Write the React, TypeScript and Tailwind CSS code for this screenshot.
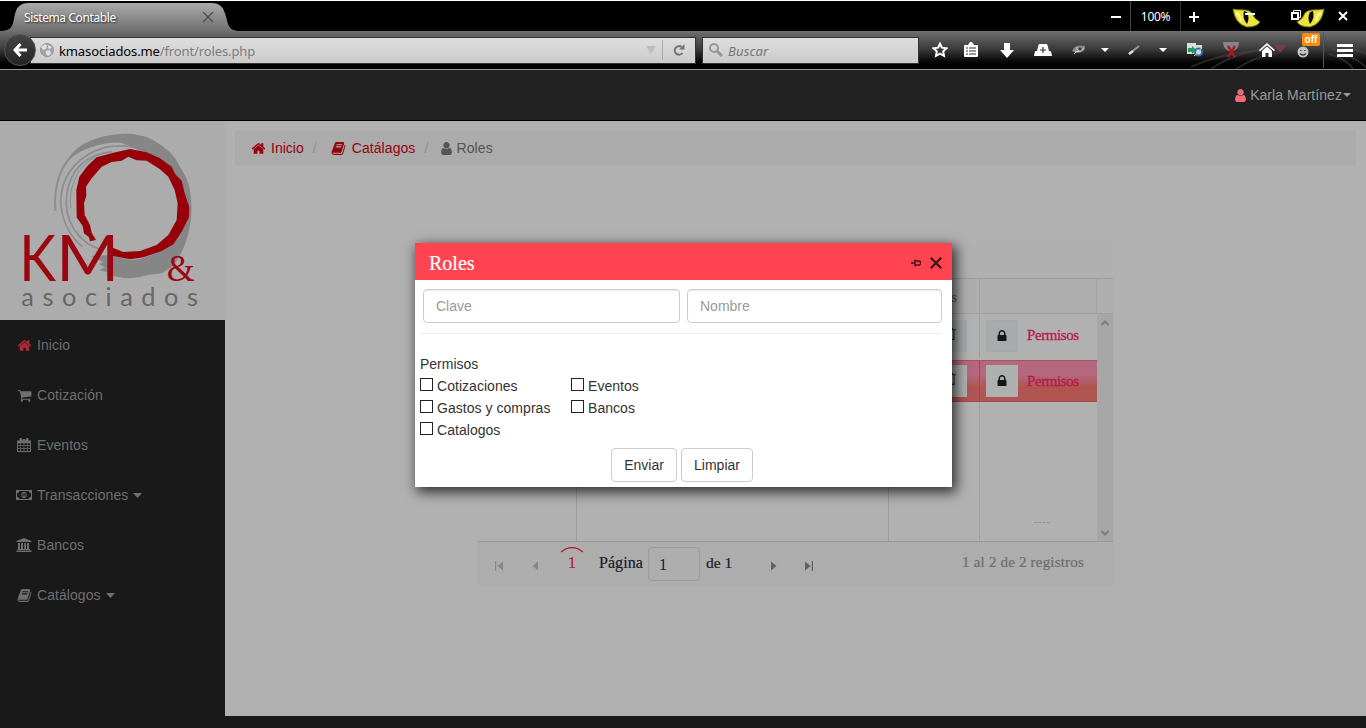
import React from "react";

const PATHS = {
  home: "M1472 992v480q0 26-19 45t-45 19h-384v-384h-256v384h-384q-26 0-45-19t-19-45v-480q0-1 .5-3t.5-3l575-474 575 474q1 2 1 6zm223-69l-62 74q-8 9-21 11h-3q-13 0-21-7l-692-577-692 577q-12 8-24 7-13-2-21-11l-62-74q-8-10-7-23.5t11-21.5l719-599q32-26 76-26t76 26l244 204v-195q0-14 9-23t23-9h192q14 0 23 9t9 23v408l219 182q10 8 11 21.5t-7 23.5z",
  user: "M1536 1399q0 109-62.5 187t-150.5 78h-854q-88 0-150.5-78t-62.5-187q0-85 8.5-160.5t31.5-152 58.5-131 94-89 134.5-34.5q131 128 313 128t313-128q76 0 134.5 34.5t94 89 58.5 131 31.5 152 8.5 160.5zm-256-887q0 159-112.5 271.5t-271.5 112.5-271.5-112.5-112.5-271.5 112.5-271.5 271.5-112.5 271.5 112.5 112.5 271.5z",
  cart: "M704 1536q0 52-38 90t-90 38-90-38-38-90 38-90 90-38 90 38 38 90zm896 0q0 52-38 90t-90 38-90-38-38-90 38-90 90-38 90 38 38 90zm128-1088v512q0 24-16.5 42.5t-40.5 21.5l-1044 122q13 60 13 70 0 16-24 64h920q26 0 45 19t19 45-19 45-45 19h-1024q-26 0-45-19t-19-45q0-11 8-31.5t16-36 21.5-40 15.5-29.5l-177-823h-204q-26 0-45-19t-19-45 19-45 45-19h256q16 0 28.5 6.5t19.5 15.5 13 24.5 8 26 5.5 29.5 4.5 26h1201q26 0 45 19t19 45z",
  lock: "M640 768h512v-192q0-106-75-181t-181-75-181 75-75 181v192zm832 96v576q0 40-28 68t-68 28h-960q-40 0-68-28t-28-68v-576q0-40 28-68t68-28h32v-192q0-184 132-316t316-132 316 132 132 316v192h32q40 0 68 28t28 68z",
  book: "M1703 478q40 57 18 129l-275 906q-19 64-76.5 107.5t-122.5 43.5h-923q-77 0-148.5-53.5t-99.5-131.5q-24-67-2-127 0-4 3-27t4-37q1-8-3-21.5t-3-19.5q2-11 8-21t16.5-23.5 16.5-23.5q23-38 45-91.5t30-91.5q3-10 .5-30t-.5-28q3-11 17-28t17-23q21-36 42-92t25-90q1-9-2.5-32t.5-28q4-13 22-30.5t22-22.5q19-26 42.5-84.5t27.5-96.5q1-8-3-25.5t-2-26.5q2-8 9-18t18-23 17-21q8-12 16.5-30.5t15-35 16-36 19.5-32 26.5-23.5 36-11.5 47.5 5.5l-1 3q38-9 51-9h761q74 0 114 56t18 130l-274 906q-36 119-71.5 153.5t-128.5 34.5h-869q-27 0-38 15-11 16-1 43 24 70 144 70h923q29 0 56-15.5t35-41.5l300-987q7-22 5-57 38 15 59 43zm-1064 2q-4 13 2 22.5t20 9.5h608q13 0 25.5-9.5t16.5-22.5l21-64q4-13-2-22.5t-20-9.5h-608q-13 0-25.5 9.5t-16.5 22.5zm-83 256q-4 13 2 22.5t20 9.5h608q13 0 25.5-9.5t16.5-22.5l21-64q4-13-2-22.5t-20-9.5h-608q-13 0-25.5 9.5t-16.5 22.5z",
};

function Icon({ name, className = "size-[14px]" }: { name: keyof typeof PATHS; className?: string }) {
  return (
    <svg viewBox="0 0 1792 1792" className={`shrink-0 ${className}`} fill="currentColor">
      <path d={PATHS[name]} />
    </svg>
  );
}

function Caret({ className = "h-1 w-2" }: { className?: string }) {
  return (
    <svg viewBox="0 0 8 4" preserveAspectRatio="none" className={`shrink-0 ${className}`} fill="currentColor">
      <path d="M0 0h8L4 4z" />
    </svg>
  );
}

function CalendarIcon() {
  return (
    <svg viewBox="0 0 14 14" className="size-[14px]" fill="currentColor">
      <path fillRule="evenodd" d="M0 2.500h14V14H0zM1 5.200v2h2.300v-2zM4 5.200v2h2.600v-2zM7.400 5.200v2H10v-2zM10.700 5.200v2H13v-2zM1 8v2h2.300V8zM4 8v2h2.600V8zM7.400 8v2H10V8zM10.700 8v2H13V8zM1 10.800V13h2.300v-2.200zM4 10.800V13h2.600v-2.200zM7.400 10.800V13H10v-2.200zM10.700 10.800V13H13v-2.200z" />
      <rect x="2.5" y="0" width="2.500" height="3.500" rx="1" />
      <rect x="9" y="0" width="2.500" height="3.500" rx="1" />
      <rect x="5.500" y="1" width="3" height="2" rx="1" />
    </svg>
  );
}

function MoneyIcon() {
  return (
    <svg viewBox="0 0 16 10" className="h-[10px] w-4" fill="none" stroke="currentColor">
      <rect x="0.5" y="0.5" width="15" height="9" strokeWidth="1.200" />
      <path d="M1 3.200C2.500 3.200 3 2.500 3 1H1zM15 3.200C13.500 3.200 13 2.500 13 1h2zM1 6.800C2.500 6.800 3 7.500 3 9H1zM15 6.800C13.500 6.800 13 7.500 13 9h2z" fill="currentColor" stroke="none" />
      <ellipse cx="8" cy="5" rx="2.200" ry="2.700" />
      <path d="M7.200 4l.8-.7V7M7 6.700h2" strokeWidth="0.800" />
    </svg>
  );
}

function BankIcon() {
  return (
    <svg viewBox="0 0 16 14" className="h-[14px] w-4" fill="currentColor">
      <path d="M8 0l7.500 3v1H.5V3zM2 5h2v6h1V5h2v6h1.200V5H10v6h1V5h2v6h1v1H1.500v-1H2zM.5 12.500h15V14H.5z" />
    </svg>
  );
}

function Logo() {
  return (
    <svg viewBox="0 3 675 597" className="h-[199px] w-[225px] shrink-0 bg-[#acacac]">
      <g fill="none" stroke="#8d8d8d">
        <path d="M166 272C160 190 185 125 235 92Q270 70 306 65" strokeWidth="6" />
        <path d="M246 380C150 295 155 130 315 82Q380 70 440 92" strokeWidth="5" />
        <path d="M298 387C235 368 190 300 200 225C210 155 250 105 335 95" strokeWidth="5" />
        <path d="M212 265C205 195 235 135 290 110" strokeWidth="3" />
      </g>
      <path
        fill="#868686"
        d="M205 120C230 65 315 38 402 42L410 45C450 48 495 78 525 114L555 166C577 210 577 275 571 310C565 355 550 395 520 437L486 460L440 466Q400 480 355 471L318 465L326 458L297 450L315 442L298 433L310 425L296 420L272 408L330 405L390 420C490 415 570 335 530 210C505 135 440 95 361 68C310 66 245 85 205 120Z"
      />
      <path
        fill="#960008"
        d="M288 360L270 364L267 352L252 340L248 318L230 292L229 210L238 170L262 138L290 112L340 98L390 87L440 97L480 115L515 140L525 162L545 182L554 220L568 262L567 292L545 335L520 373L485 393L430 412L390 418L340 408L324 394L330 380L370 396L420 393L470 375L505 345L530 300L533 250L524 210L505 170L480 148L440 122L410 121L385 110L365 122L335 126L305 140L275 175L258 200L259 228L252 250L254 285L270 315L275 338Z"
      />
      <g fill="#9b0711">
        <text x="58" y="482" fontFamily="Lato" fontSize="192" textLength="110" lengthAdjust="spacingAndGlyphs">K</text>
        <text x="168" y="482" fontFamily="Lato" fontSize="192" textLength="190" lengthAdjust="spacingAndGlyphs">M</text>
        <text x="500" y="482" fontFamily="Liberation Serif" fontSize="112" textLength="84" lengthAdjust="spacingAndGlyphs">&amp;</text>
      </g>
      <text x="64" y="557" fontFamily="Lato" fontSize="76" textLength="530" fill="#666">asociados</text>
    </svg>
  );
}

function Eye({ flip = false }: { flip?: boolean }) {
  return (
    <svg viewBox="0 0 30 20" className={`h-5 w-[30px] ${flip ? "-scale-x-100" : ""}`}>
      <path d="M1 1C8 3 15 0 20 5Q22 11 28 14Q25 19 15 19Q3 16 1 1Z" fill="#ece43c" stroke="#77721a" />
      <path d="M12 3Q10 10 15 16Q18 10 15 4Z" fill="#0a0900" />
      <path d="M4 5q4 1 5 8" stroke="#ffffa0" strokeWidth="2" fill="none" />
    </svg>
  );
}

function TabStrip() {
  return (
    <div className="flex h-[31px] border-t border-white bg-black">
      <div className="relative h-[30px] w-[240px]">
        <svg viewBox="0 0 240 30" className="absolute inset-0 h-[30px] w-[240px]">
          <defs>
            <linearGradient id="tab" x1="0" y1="0" x2="0" y2="1">
              <stop offset="0" stopColor="#aaa" />
              <stop offset="1" stopColor="#707070" />
            </linearGradient>
          </defs>
          <path d="M0 30C16 30 12 20 16 10Q19 2 28 2H212Q221 2 224 10C229 21 226 30 240 30Z" fill="url(#tab)" />
        </svg>
        <div className="relative flex h-[30px] items-center justify-between pr-[26px] pl-6">
          <span className="pt-[3px] text-[12px] tracking-[-0.4px] text-white [text-shadow:1px_1px_2px_#222]">Sistema Contable</span>
          <svg viewBox="0 0 12 12" className="mt-0.5 size-3" stroke="#4b4b4b" strokeWidth="1.200">
            <path d="M1 1l10 10M11 1L1 11" />
          </svg>
        </div>
      </div>
      <div className="ml-auto flex h-[30px] items-center text-white">
        <div className="flex h-full w-[31px] items-center justify-center border-r border-[#444] pl-[2px]">
          <div className="mt-0.5 h-0.5 w-[10px] bg-white" />
        </div>
        <div className="flex h-full w-[50px] items-center justify-center border-r border-[#333] pt-0.5 text-[12px] tracking-[-0.3px]">100%</div>
        <div className="flex w-[28px] justify-center pt-0.5 pr-[2px]">
          <svg viewBox="0 0 10 10" className="size-[10px]" stroke="white" strokeWidth="2"><path d="M5 0v10M0 5h10" /></svg>
        </div>
        <div className="relative ml-[23px] h-5 w-[30px] translate-y-0.5">
          <Eye />
          <div className="absolute top-[5px] left-[13px] h-0.5 w-[10px] bg-white" />
        </div>
        <div className="relative ml-[33px] h-5 w-[30px] translate-y-0.5">
          <Eye flip />
          <svg viewBox="0 0 10 10" className="absolute top-[2px] -left-[4px] size-[10px]" fill="none" stroke="white">
            <path d="M2.500 2V.5h7v7H8" /><rect x="1" y="3" width="6" height="6" strokeWidth="2" fill="#000" />
          </svg>
        </div>
        <div className="ml-[11px] flex w-[30px] pl-[2px]">
          <svg viewBox="0 0 10 10" className="size-[10px]" stroke="white" strokeWidth="2"><path d="M1 1l8 8M9 1L1 9" /></svg>
        </div>
      </div>
    </div>
  );
}

function AddressBar() {
  return (
    <div className="ml-[30px] flex h-[27px] w-[666px] items-center border border-[#333] bg-linear-to-b from-[#dedede] to-[#cbcbcb] pl-[9px]">
      <svg viewBox="0 0 14 14" className="size-[14px]">
        <circle cx="7" cy="7" r="6.500" fill="#a5a5a5" stroke="#929292" />
        <path d="M1 4l4-3 2 2-1 3-3 1zM8 2l4 2-2 2-2-1zM6 8l4-1 1 4-3 2-2-2z" fill="#dedede" />
      </svg>
      <span className="ml-[5px] pt-[3px] text-[13px] tracking-[-0.12px] whitespace-nowrap text-black">
        kmasociados.me<span className="text-[#7c7c7c]">/front/roles.php</span>
      </span>
      <svg viewBox="0 0 10 8" className="mr-[6px] ml-auto h-2 w-[10px]"><path d="M0 0h10L5 8z" fill="#bdbdbd" /></svg>
      <div className="h-5 w-px bg-[#aaa]" />
      <svg viewBox="0 0 12 12" className="mr-[10px] ml-[10px] size-3" fill="none" stroke="#737373" strokeWidth="2">
        <path d="M9.500 9A4.300 4.300 0 1 1 8.500 2.800" /><path d="M11.500 0v5.500H6z" fill="#737373" stroke="none" />
      </svg>
    </div>
  );
}

function ToolbarIcons() {
  const cell = "flex items-center justify-center";
  return (
    <div className="relative ml-[5px] flex h-[38px] items-center text-white">
      <svg viewBox="0 0 230 38" className="absolute top-0 right-0 h-[38px] w-[230px]" fill="none" stroke="#514850" strokeWidth="2">
        <path d="M75 38Q100 20 145 16M55 36Q85 22 130 19M100 38Q120 25 142 22M193 23Q212 29 217 38M196 18Q218 25 230 36M200 14Q222 19 230 23" opacity=".45" />
        <path d="M138 14h13l-7 8z" fill="#763f3f" stroke="none" />
      </svg>
      <div className={`${cell} w-8`}>
        <svg viewBox="0 0 16 16" className="size-4" fill="none" stroke="white" strokeWidth="2"><path d="M8 1.700l1.900 4 4.500.6-3.200 3.100.8 4.400-4-2.100-4 2.100.8-4.400L1.600 6.300l4.500-.6z" /></svg>
      </div>
      <div className={`${cell} w-[30px]`}>
        <svg viewBox="0 0 14 16" className="h-4 w-[14px]"><path d="M1 3h3l2-3h2l2 3h3q1 0 1 1v10q0 1-1 1H1q-1 0-1-1V4q0-1 1-1z" fill="#fff" /><path d="M2 6h2m1 0h7M2 9h2m1 0h7M2 12h2m1 0h7" stroke="#333" strokeWidth="1.200" /></svg>
      </div>
      <div className={`${cell} w-[42px]`}>
        <svg viewBox="0 0 14 15" className="h-[15px] w-[14px]" fill="#fff"><path d="M4 0h6v7h4l-7 8-7-8h4z" /></svg>
      </div>
      <div className={`${cell} w-[30px]`}>
        <svg viewBox="0 0 18 14" className="h-[14px] w-[18px]"><path d="M3 8L4.500 2Q4.800 1 6 1h6q1.200 0 1.500 1L15 8h1.500Q18 10 18 13H0q0-3 1.500-5z" fill="#fff" /><path d="M9 4v6M6 7h6" stroke="#333" strokeWidth="1.200" /></svg>
      </div>
      <div className={`${cell} w-[42px]`}>
        <svg viewBox="0 0 16 12" className="h-3 w-4"><path d="M1 7Q4 0 14 2Q15 9 5 9z" fill="#888" /><path d="M4 7q4 2 9-3M6 3q-1 4 4 4M3 10l2-2" fill="none" stroke="#d2d2d2" /><circle cx="9" cy="5" r="1.500" fill="#333" /></svg>
      </div>
      <div className={`${cell} w-[10px]`}><Caret /></div>
      <div className={`${cell} w-12`}>
        <svg viewBox="0 0 12 12" className="size-3"><path d="M1 10L11 2" stroke="#999" strokeWidth="2" /><path d="M1 10l4-3" stroke="#ddd" strokeWidth="2.500" /></svg>
      </div>
      <div className={`${cell} w-[10px]`}><Caret /></div>
      <div className={`${cell} w-[54px]`}>
        <svg viewBox="0 0 16 14" className="h-[14px] w-4"><path d="M0 0h9v11H0zM9 2h6v10H8z" fill="#d6dfdf" /><path d="M1 5h4V3l4 4-4 4V9H1z" fill="#249a56" /><circle cx="11.500" cy="9" r="3.500" fill="none" stroke="#2575c8" strokeWidth="2" /><path d="M7 13Q12 10 15 4" stroke="#e7cf4d" fill="none" /></svg>
      </div>
      <div className={`${cell} relative w-[18px]`}>
        <svg viewBox="0 0 16 16" className="size-4"><path d="M0 0h16q0 7-6 9H6Q0 7 0 0z" fill="#858585" /><path d="M5 4l7 11M12 4L5 15" stroke="#a61d26" strokeWidth="2.500" /></svg>
      </div>
      <div className={`${cell} relative w-[54px]`}>
        <svg viewBox="0 0 16 14" className="h-[14px] w-4" fill="#fff"><path d="M8 0l8 7-1 1.200-7-6-7 6L0 7zM3 8l5-4.500L13 8v6H9.500v-4h-3v4H3z" /></svg>
      </div>
      <div className={`${cell} relative w-[18px]`}>
        <svg viewBox="0 0 12 12" className="mt-1 size-3"><circle cx="6" cy="6" r="5.500" fill="#c3c3c3" /><path d="M3 7.500q3 3 6 0M4 4v1M8 4v1" fill="none" stroke="#333" strokeWidth="1.300" /></svg>
        <span className="absolute -top-[9px] left-2 flex h-[13px] w-[18px] items-center justify-center rounded-[2px] bg-[#ff8b0b] font-['Liberation_Sans'] text-[10px] font-bold text-white">off</span>
      </div>
      <div className="ml-[11px] h-[36px] w-px bg-[#555]" />
      <div className="relative flex w-[42px] flex-col items-center gap-[2px]">
        <div className="h-[3px] w-4 bg-white" />
        <div className="h-[3px] w-4 bg-white" />
        <div className="h-[3px] w-4 bg-white" />
      </div>
    </div>
  );
}

function Toolbar() {
  return (
    <div className="relative flex h-[39px] items-center border-b border-[#999] bg-linear-to-b from-[#707070] via-[#383838] to-black">
      <AddressBar />
      <div className="absolute top-[3px] left-[4px] flex size-8 items-center justify-center rounded-full border border-[#555] bg-linear-to-b from-[#454545] to-[#242424]">
        <svg viewBox="0 0 14 14" className="size-[14px]" fill="none" stroke="#fff" strokeWidth="3"><path d="M7.500 1L2 7l5.500 6M2.500 7H14" /></svg>
      </div>
      <div className="ml-[6px] flex h-[27px] w-[217px] items-center border border-[#333] bg-linear-to-b from-[#dedede] to-[#cbcbcb] pl-[6px]">
        <svg viewBox="0 0 14 14" className="size-[14px]" fill="none" stroke="#969696" strokeWidth="2"><circle cx="5" cy="5" r="4" /><path d="M8 8l5 5" strokeWidth="3" /></svg>
        <span className="ml-[5px] pt-[3px] text-[13px] tracking-[0.15px] text-[#757575] italic">Buscar</span>
      </div>
      <ToolbarIcons />
    </div>
  );
}

const MENU: { label: string; icon: React.ReactNode; caret?: boolean }[] = [
  { label: "Inicio", icon: <Icon name="home" className="size-[15px] text-[#ad2a32]" /> },
  { label: "Cotización", icon: <Icon name="cart" className="size-[15px]" /> },
  { label: "Eventos", icon: <CalendarIcon /> },
  { label: "Transacciones", icon: <MoneyIcon />, caret: true },
  { label: "Bancos", icon: <BankIcon /> },
  { label: "Catálogos", icon: <Icon name="book" className="size-[15px]" />, caret: true },
];

function Sidebar() {
  return (
    <aside className="flex w-[225px] shrink-0 flex-col bg-[#191919]">
      <Logo />
      {MENU.map((m) => (
        <div key={m.label} className="flex h-[50px] items-center pl-4 text-[14px] tracking-[0.06px] text-[#6f6f6f]">
          <span className="mr-[5px] flex w-4 justify-center">{m.icon}</span>
          {m.label}
          {m.caret && <Caret className="ml-[5px] h-[5px] w-[9px]" />}
        </div>
      ))}
    </aside>
  );
}

function Breadcrumb() {
  return (
    <div className="mx-[10px] mt-[9px] flex h-9 items-center rounded bg-[#ababab] pl-[16px] text-[14px] text-[#95000d]">
      <Icon name="home" className="size-[15px]" />
      <span className="ml-[5px]">Inicio</span>
      <span className="mx-[9px] w-[4px] text-[#8f8f8f]">/</span>
      <Icon name="book" className="ml-[5px] size-[15px]" />
      <span className="ml-[6px] tracking-[0.08px]">Catálagos</span>
      <span className="mx-[9px] w-[4px] text-[#8f8f8f]">/</span>
      <Icon name="user" className="ml-[2px] size-[15px] text-[#555]" />
      <span className="ml-[2px] tracking-[0.1px] text-[#555]">Roles</span>
    </div>
  );
}

function GridRow({ active = false }: { active?: boolean }) {
  const line = active ? "border-[#a24653]" : "border-[#a0a0a0]";
  const button = active ? "bg-[#afb0b0]" : "border border-[#a5a8a9] bg-[#a8aaab]";
  return (
    <div className={`flex items-center ${active ? "h-[42px] border-t border-b border-t-[#aa5166] border-b-[#aa4a48] bg-linear-to-b from-[#b4687e] from-35% to-[#b05551] to-65%" : "h-[46px] pb-[3px]"}`}>
      <div className={`h-full w-[100px] border-r ${line}`} />
      <div className={`h-full w-[312px] border-r ${line}`} />
      <div className={`flex h-full w-[91px] items-center justify-end border-r pr-[12px] ${line}`}>
        <div className={`flex size-8 items-center justify-center ${button}`}>
          <svg viewBox="0 0 14 14" className="mb-1 size-3" fill="none" stroke="#26343a" strokeWidth="1.300"><path d="M1 2h12M5 2V.700h4V2M3.500 2v11.300h7V2" /></svg>
        </div>
      </div>
      <div className="flex w-[117px] items-center pl-[6px]">
        <div className={`flex size-8 items-center justify-center ${button}`}>
          <Icon name="lock" className="size-[14px] text-[#161616]" />
        </div>
        <span className="ml-[9px] text-[15px] tracking-[-0.4px] text-[#b51b48] [-webkit-text-stroke:0.3px_#b51b48]">Permisos</span>
      </div>
    </div>
  );
}

function DataGrid() {
  const arrow = "h-[10px] w-2";
  return (
    <div className="mt-[76px] ml-[252px] w-[636px] font-['Liberation_Serif']">
      <div className="h-[37px] border-b border-[#9b9b9b] bg-[#b0b0b0]" />
      <div className="flex h-[35px] border-b border-[#a0a0a0] bg-[#aeaeae] text-[15px] text-[#6c7176]">
        <div className="w-[100px] border-r border-[#a0a0a0]" />
        <div className="w-[312px] border-r border-[#a0a0a0]" />
        <div className="flex w-[91px] items-center justify-end border-r border-[#a0a0a0] pt-0.5 pr-[22px] [-webkit-text-stroke:0.3px_#6c7176]">Acciones</div>
        <div className="w-[117px] border-r border-[#a0a0a0]" />
      </div>
      <div className="flex h-[228px] border-b border-[#999]">
        <div className="flex w-[620px] flex-col">
          <GridRow />
          <GridRow active />
          <div className="flex flex-1">
            <div className="w-[100px] border-r border-[#9c9c9c]" />
            <div className="w-[312px] border-r border-[#9c9c9c]" />
            <div className="w-[91px] border-r border-[#a0a0a0]" />
            <div className="flex flex-1 items-end pb-[18px] pl-[54px]"><div className="h-px w-4 border-t border-dashed border-[#b98389]" /></div>
          </div>
        </div>
        <div className="flex w-4 flex-col items-center justify-between bg-[#a6a6a6] pt-[6px] pb-[5px]">
          <svg viewBox="0 0 8 6" className="h-[6px] w-2" fill="none" stroke="#7f7f7f" strokeWidth="2"><path d="M.5 5L4 1.500 7.500 5" /></svg>
          <svg viewBox="0 0 8 6" className="h-[6px] w-2" fill="none" stroke="#7f7f7f" strokeWidth="2"><path d="M.5 1L4 4.500 7.500 1" /></svg>
        </div>
      </div>
      <div className="flex h-[44px] items-center rounded-b bg-[#adadad] text-[16px] text-[#171b28]">
        <svg viewBox="0 0 8 10" className={`mt-[3px] ml-[18px] ${arrow}`} fill="#868686"><path d="M0 0h1.200v10H0zM8 .5v9L2.500 5z" /></svg>
        <svg viewBox="0 0 8 10" className={`mt-[3px] ml-[28px] ${arrow}`} fill="#868686"><path d="M7 .5v9L1.500 5z" /></svg>
        <div className="ml-[21px] flex h-full w-6 flex-col items-center pt-[5px] text-[#b31e2d]">
          <svg viewBox="0 0 24 6" className="h-[6px] w-6" fill="none" stroke="#b31e2d" strokeWidth="1.300"><path d="M1 5Q12-4 23 5" /></svg>
          <span className="-mt-px leading-[22px] [-webkit-text-stroke:0.2px_#b31e2d]">1</span>
        </div>
        <span className="mb-[2px] ml-[15px] w-[49px] tracking-[0.05px] [-webkit-text-stroke:0.2px_#171b28]">Página</span>
        <div className="mb-px flex h-[34px] w-[52px] items-center rounded border border-[#999] pt-0.5 pl-[10px]">1</div>
        <span className="mb-[2px] ml-[6px] w-[64px] text-[15.500px] [-webkit-text-stroke:0.2px_#171b28]">de 1</span>
        <svg viewBox="0 0 8 10" className={`mt-[3px] ${arrow}`} fill="#606060"><path d="M1 .5v9L6.500 5z" /></svg>
        <svg viewBox="0 0 8 10" className={`mt-[3px] ml-[27px] ${arrow}`} fill="#606060"><path d="M6.800 0H8v10H6.800zM0 .5v9L5.500 5z" /></svg>
        <span className="mr-[29px] mb-[3px] ml-auto text-[15px] tracking-[0.19px] text-[#6a6d6d] [-webkit-text-stroke:0.2px_#6a6d6d]">1 al 2 de 2 registros</span>
      </div>
    </div>
  );
}

function Check({ label }: { label: string }) {
  return (
    <label className="flex h-[22px] items-center">
      <span className="mr-1 size-[13px] -translate-y-0.5 border border-[#222] bg-white" />
      {label}
    </label>
  );
}

function RolesDialog() {
  const input = "h-[34px] rounded border border-[#ccc] bg-white px-3 text-[14px] text-[#333] shadow-[inset_0_1px_1px_rgba(0,0,0,0.075)] outline-none placeholder:text-[#999]";
  const button = "h-[34px] rounded border border-[#ccc] bg-white text-[14px] text-[#333]";
  return (
    <div className="absolute top-[243px] left-[415px] flex h-[244px] w-[537px] flex-col bg-white text-[14px] text-[#333] shadow-[3px_4px_12px_1px_rgba(0,0,0,0.75)]">
      <div className="flex h-[37px] shrink-0 items-center bg-[#ff4350] pr-[10px] pl-[14px] text-white">
        <span className="pt-[2px] font-['Liberation_Serif'] text-[20px] [-webkit-text-stroke:0.2px_white]">Roles</span>
        <svg viewBox="0 0 10 8" className="mt-[3px] ml-auto h-2 w-[10px]" fill="none" stroke="#3c1619" strokeWidth="1.300"><path d="M0 4h4M4 .5v7M4 2h4.500Q9.500 2 9.500 4T8.500 6H4" /></svg>
        <svg viewBox="0 0 12 12" className="mt-[3px] ml-[9px] size-3" stroke="#3c1619" strokeWidth="2.200"><path d="M.7.700l10.600 10.600M11.300.700L.7 11.300" /></svg>
      </div>
      <div className="mt-[9px] ml-2 flex gap-[7px]">
        <input className={`w-[257px] ${input}`} placeholder="Clave" />
        <input className={`w-[255px] ${input}`} placeholder="Nombre" />
      </div>
      <div className="mt-[10px] mr-[10px] ml-[5px] border-t border-[#eee]" />
      <div className="mt-[19px] ml-[5px] h-[22px] leading-[22px]">Permisos</div>
      <div className="ml-[5px] grid grid-cols-[151px_1fr] tracking-[0.04px]">
        <Check label="Cotizaciones" />
        <Check label="Eventos" />
        <Check label="Gastos y compras" />
        <Check label="Bancos" />
        <Check label="Catalogos" />
      </div>
      <div className="mt-[7px] ml-[196px] flex gap-1">
        <button className={`w-[66px] ${button}`}>Enviar</button>
        <button className={`w-[72px] ${button}`}>Limpiar</button>
      </div>
    </div>
  );
}

export default function App() {
  return (
    <div className="relative flex h-[728px] w-[1366px] flex-col overflow-hidden bg-[#191919] font-['Liberation_Sans',sans-serif]">
      <div className="font-['Noto_Sans',sans-serif]">
        <TabStrip />
        <Toolbar />
      </div>
      <header className="flex h-[51px] shrink-0 items-center justify-end border-b border-black bg-[#222] pr-[15px] text-[14px] tracking-[0.06px] text-[#999]">
        <Icon name="user" className="mr-[2px] size-[15px] text-[#ee6c78]" />
        Karla Martínez
        <Caret className="ml-px h-1 w-2" />
      </header>
      <div className="flex h-[607px] shrink-0">
        <Sidebar />
        <main className="h-[595px] flex-1 bg-[#b1b1b1]">
          <Breadcrumb />
          <DataGrid />
        </main>
      </div>
      <RolesDialog />
    </div>
  );
}
